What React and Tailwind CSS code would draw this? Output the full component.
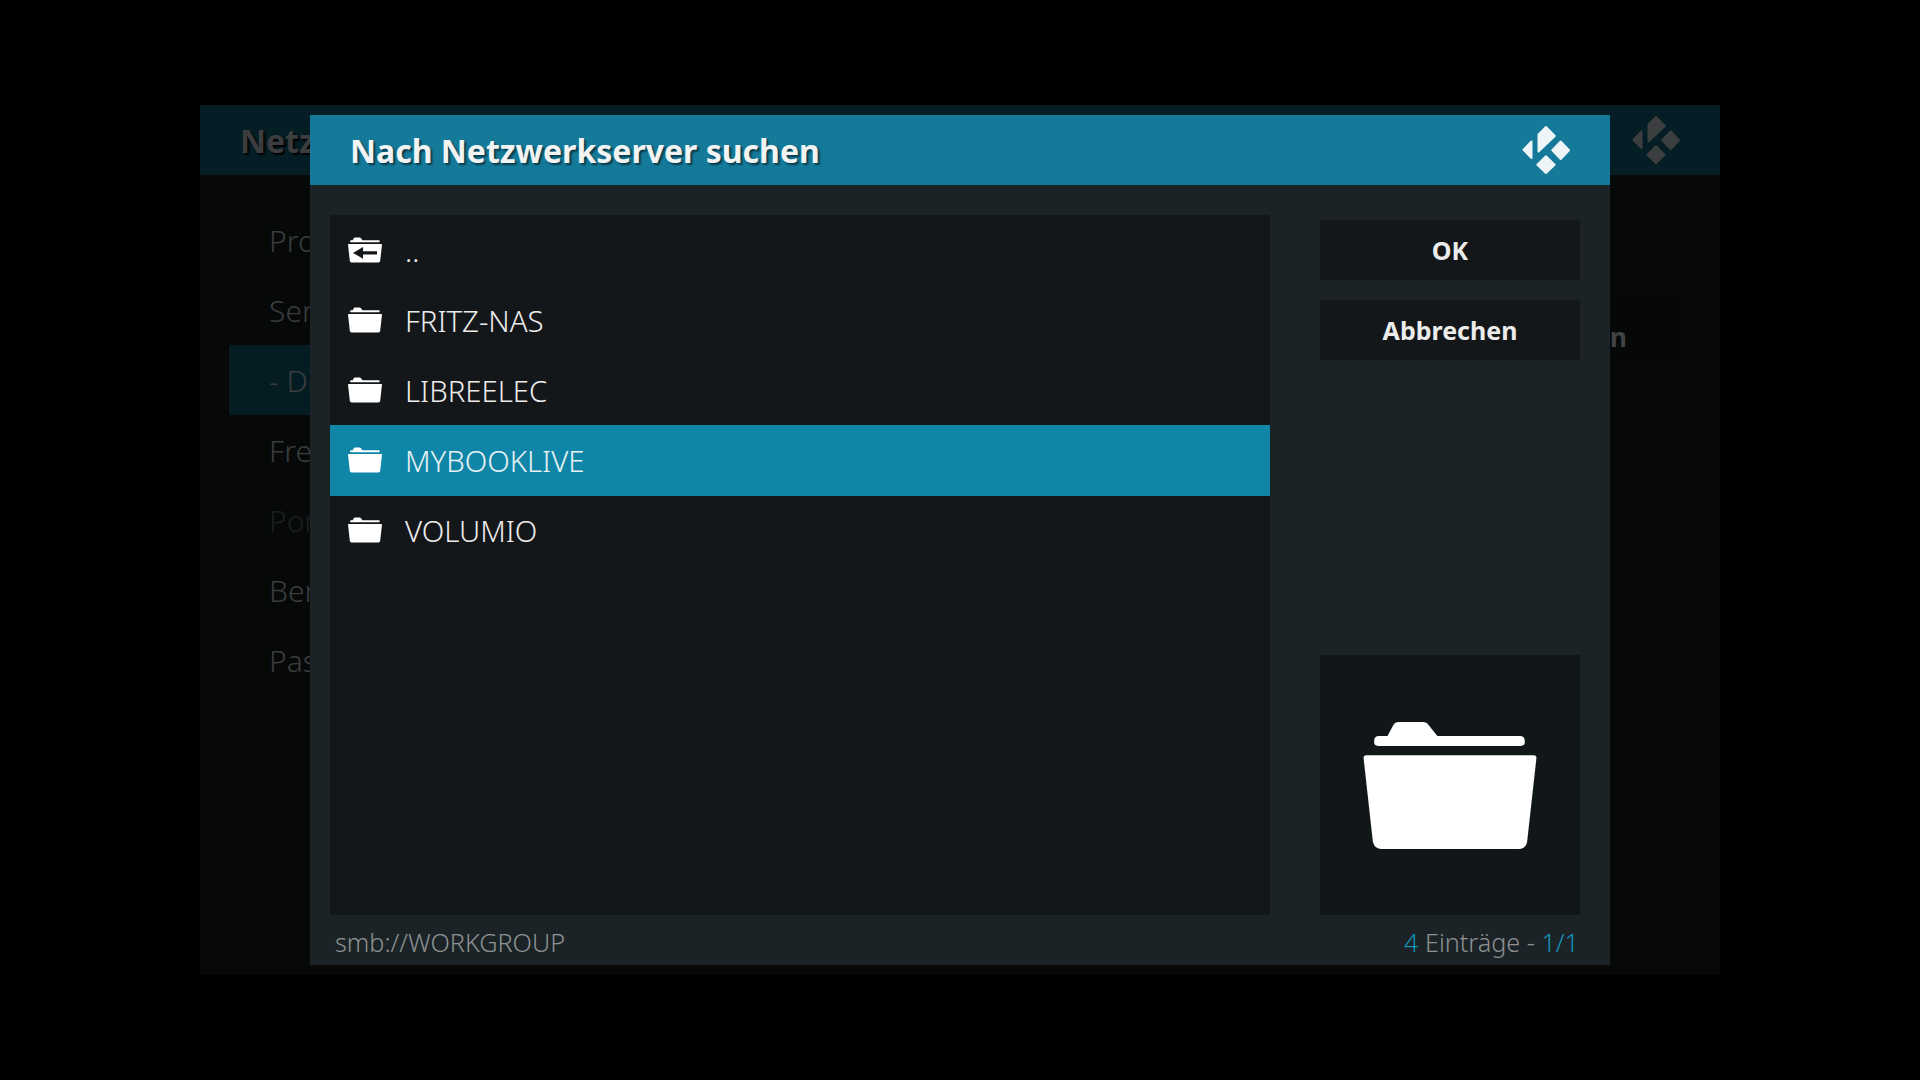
import React from "react";

function FolderIcon({ className, back = false, cut = "#141719" }) {
  return (
    <svg viewBox="0 0 520 382" className={className} fill="currentColor" aria-hidden="true">
      <path d="M46 42H72L90 8Q94 0 104 0H178Q190 0 195 8L222 42H470Q485 42 485 57V62Q485 72 472 72H44Q32 72 32 62V56Q32 42 46 42Z" />
      <path d="M8 100H512Q520 100 520 108L492 360Q489 382 466 382H54Q33 382 28 360L0 108Q0 100 8 100Z" />
      {back && <path d="M76 235L230 147V210H444V260H230V323Z" fill={cut} />}
    </svg>
  );
}

function KodiLogo({ className }) {
  return (
    <svg viewBox="0 0 48 48" className={className} fill="currentColor" stroke="currentColor" strokeWidth="2" strokeLinejoin="round" aria-hidden="true">
      <path d="M9.5 15.5V32L1.5 23.7Z" />
      <path d="M16.5 8.5L24 1L32.8 10L16.5 25.5Z" />
      <path d="M38.7 15.5L47 24.2L38.7 33L30.3 24.2Z" />
      <path d="M24 30.3L32.6 38.7L24 47L15.4 38.7Z" />
    </svg>
  );
}

const menu = [
  { t: "Profil", c: "text-[#3a3d3e]" },
  { t: "Server", c: "text-[#3a3d3e]" },
  { t: "- Dienst", c: "text-[#3a3d3e]", active: true },
  { t: "Freigabe", c: "text-[#3a3d3e]" },
  { t: "Port", c: "text-[#1c1f20]" },
  { t: "Benutzer", c: "text-[#3a3d3e]" },
  { t: "Passwort", c: "text-[#3a3d3e]" },
];

const rows = [
  { t: "..", back: true },
  { t: "FRITZ-NAS" },
  { t: "LIBREELEC" },
  { t: "MYBOOKLIVE", active: true },
  { t: "VOLUMIO" },
];

export default function App() {
  return (
    <div className="relative flex h-screen w-full items-center justify-center overflow-hidden bg-black font-['Noto_Sans','Open_Sans',sans-serif]">
      {/* dimmed settings window behind the dialog */}
      <div className="flex h-[870px] w-[1520px] flex-col bg-[#070909]">
        <div className="flex h-[70px] items-center justify-between bg-[#051e25] pl-[40px] pr-[40px]">
          <span className="pt-[1px] text-[32px] font-bold leading-none text-[#3c3d3e] [text-shadow:2px_2px_2px_#000]">Netzwerk</span>
          <KodiLogo className="h-[48px] w-[48px] text-[#3c3f40]" />
        </div>
        <div className="flex flex-1 pt-[30px]">
          <div className="ml-[29px] w-[400px] font-light">
            {menu.map((m) => (
              <div
                key={m.t}
                className={`flex h-[70px] items-center pl-[40px] text-[30px] ${m.c} ${m.active ? "bg-[#041c22]" : ""}`}
              >
                {m.t}
              </div>
            ))}
          </div>
          <div className="ml-auto mr-[33px] mt-[90px] flex h-[70px] w-[440px] items-center justify-end bg-[#060808] pr-[60px] pt-[13px] text-[26px] font-bold leading-none text-[#404344]">
            Verbinden
          </div>
        </div>
      </div>

      {/* dialog */}
      <div className="absolute left-1/2 top-1/2 flex h-[850px] w-[1300px] -translate-x-1/2 -translate-y-1/2 flex-col bg-[#1b2326]">
        <div className="flex h-[70px] shrink-0 items-center justify-between bg-[#157a9a] pl-[40px] pr-[40px]">
          <h1 className="pt-[1px] text-[32px] font-bold leading-none text-[#f2f3f3] [text-shadow:2px_2px_2px_#0a3a4a]">
            Nach Netzwerkserver suchen
          </h1>
          <KodiLogo className="h-[48px] w-[48px] text-[#edf5f8]" />
        </div>

        <div className="flex min-h-0 flex-1 pl-[20px] pr-[30px] pt-[30px]">
          <div className="h-[700px] w-[940px] rounded-[3px] bg-[#141719]">
            {rows.map((r) => (
              <div
                key={r.t}
                className={`flex items-center gap-[23px] pl-[18px] ${r.active ? "mb-[-1px] h-[71px] bg-[#0f86a8] text-[#e8f1f4]" : "h-[70px] text-[#ececec]"}`}
              >
                <FolderIcon className={`h-[26px] w-[34px] text-white ${r.active ? "mb-[1px]" : ""}`} back={r.back} />
                <span className={`text-[29.3px] font-light leading-none ${r.active ? "pt-[3px]" : "pt-[4px]"}`}>{r.t}</span>
              </div>
            ))}
          </div>
          <div className="ml-[50px] flex h-[700px] w-[260px] flex-col pt-[5px]">
            <div className="flex h-[60px] items-center justify-center rounded-[3px] bg-[#141719] pt-[1px] text-[25px] font-bold leading-none text-[#ececec]">OK</div>
            <div className="mt-[20px] flex h-[60px] items-center justify-center rounded-[3px] bg-[#141719] pt-[1px] text-[25px] font-bold leading-none text-[#ececec]">Abbrechen</div>
            <div className="mt-auto flex h-[260px] items-center justify-center bg-[#111718]">
              <FolderIcon className="h-[127px] w-[174px] text-white" />
            </div>
          </div>
        </div>

        <div className="flex h-[50px] shrink-0 items-center justify-between pl-[25px] pr-[31px] pt-[6px] text-[25.2px] font-light leading-none text-[#8d9192]">
          <span>smb://WORKGROUP</span>
          <span>
            <span className="text-[#1593b8]">4</span> Einträge - <span className="text-[#1593b8]">1/1</span>
          </span>
        </div>
      </div>
    </div>
  );
}
